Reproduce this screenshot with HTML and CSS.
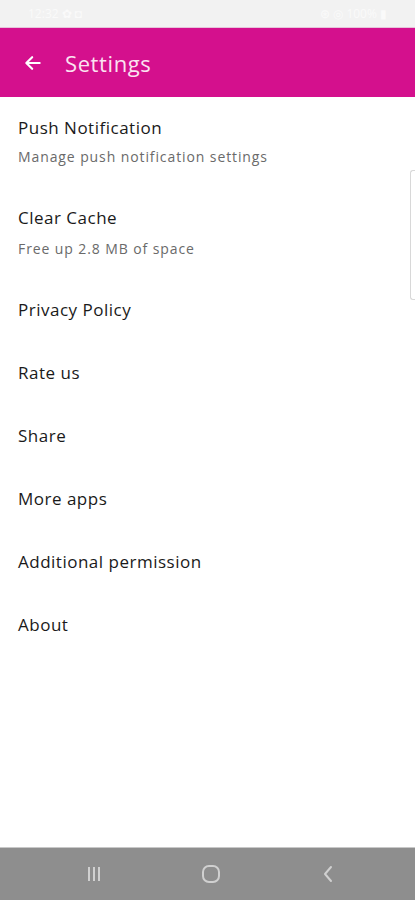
FILE: index.html
```html
<!DOCTYPE html>
<html lang="en">

<head>
    <meta charset="UTF-8">
    <meta name="viewport" content="width=device-width, initial-scale=1.0">
    <title>Settings</title>
    <link rel="stylesheet" href="styles.css">
</head>

<body>
    <div class="screen">
        <!-- status bar -->
        <div class="status-bar">
            <span class="status-left">12:32 ✿ ◘</span>
            <span class="status-right">⊛ ◎ 100% ▮</span>
        </div>

        <!-- app bar -->
        <header class="app-bar">
            <svg class="back" width="20" height="20" viewBox="0 0 24 24">
                <path d="M20 12H5M11 5l-7 7 7 7" fill="none" stroke="#fff" stroke-width="2.6" stroke-linecap="round" stroke-linejoin="round" />
            </svg>
            <h1>Settings</h1>
        </header>

        <!-- settings list -->
        <main class="list">
            <div class="item two-line">
                <div class="title">Push Notification</div>
                <div class="sub">Manage push notification settings</div>
            </div>
            <div class="item two-line second">
                <div class="title">Clear Cache</div>
                <div class="sub">Free up 2.8 MB of space</div>
            </div>
            <div class="item"><div class="title">Privacy Policy</div></div>
            <div class="item"><div class="title">Rate us</div></div>
            <div class="item"><div class="title">Share</div></div>
            <div class="item"><div class="title">More apps</div></div>
            <div class="item"><div class="title">Additional permission</div></div>
            <div class="item"><div class="title">About</div></div>
            <div class="edge-handle"></div>
        </main>

        <!-- system navigation -->
        <footer class="nav-bar">
            <svg width="20" height="20" viewBox="0 0 20 20">
                <path d="M5 3v14M10 3v14M15 3v14" stroke="#d0d0d0" stroke-width="2" />
            </svg>
            <svg width="22" height="22" viewBox="0 0 22 22">
                <rect x="3" y="3" width="16" height="16" rx="6" fill="none" stroke="#d0d0d0" stroke-width="2" />
            </svg>
            <svg width="20" height="20" viewBox="0 0 20 20">
                <path d="M13 3l-6 7 6 7" fill="none" stroke="#d0d0d0" stroke-width="2" stroke-linecap="round" stroke-linejoin="round" />
            </svg>
        </footer>
    </div>
</body>

</html>
```

FILE: styles.css
```css
/* page base */
body {
    margin: 0;
    font-family: "Open Sans", "Noto Sans", sans-serif;
    background-color: #fff;
}

.screen {
    width: 415px;
    height: 900px;
    display: flex;
    flex-direction: column;
    overflow: hidden;
}

/* status bar, washed out like the screenshot */
.status-bar {
    height: 28px;
    flex: none;
    background-color: #f2f2f2;
    color: #fafafa;
    font-size: 12px;
    display: flex;
    justify-content: space-between;
    align-items: center;
    padding: 0 28px 0 28px;
    border-bottom: 1px solid #e6c3da;
    box-sizing: border-box;
}

/* app bar */
.app-bar {
    height: 69px;
    flex: none;
    background-color: #d4108d;
    display: flex;
    align-items: center;
    padding-left: 23px;
    gap: 22px;
}

.app-bar h1 {
    margin: 0;
    font-size: 22px;
    font-weight: 500;
    color: #fbe3f1;
    letter-spacing: 0.6px;
}

/* list */
.list {
    flex: 1;
    position: relative;
    padding-top: 16px;
}

.item {
    height: 63px;
    padding-left: 18px;
    box-sizing: border-box;
    padding-top: 6px;
}

.item.two-line {
    height: 90px;
    padding-top: 3px;
}

.item.two-line.second {
    height: 89px;
}

.item.two-line.second .sub {
    margin-top: 10px;
}

.title {
    font-size: 17px;
    color: #1a1a1a;
    line-height: 24px;
    letter-spacing: 0.5px;
}

.sub {
    margin-top: 8px;
    font-size: 14px;
    color: #6a6a6a;
    line-height: 18px;
    letter-spacing: 0.9px;
}

/* edge panel handle on right side */
.edge-handle {
    position: absolute;
    right: 0;
    top: 73px;
    width: 4px;
    height: 128px;
    border: 1px solid #d8d8d8;
    border-right: none;
    border-radius: 3px 0 0 3px;
}

/* bottom system navigation */
.nav-bar {
    height: 52px;
    flex: none;
    background-color: #8e8e8e;
    border-top: 1px solid #c8c8c8;
    display: flex;
    justify-content: center;
    align-items: center;
    gap: 96px;
    padding-left: 6px;
}
```
